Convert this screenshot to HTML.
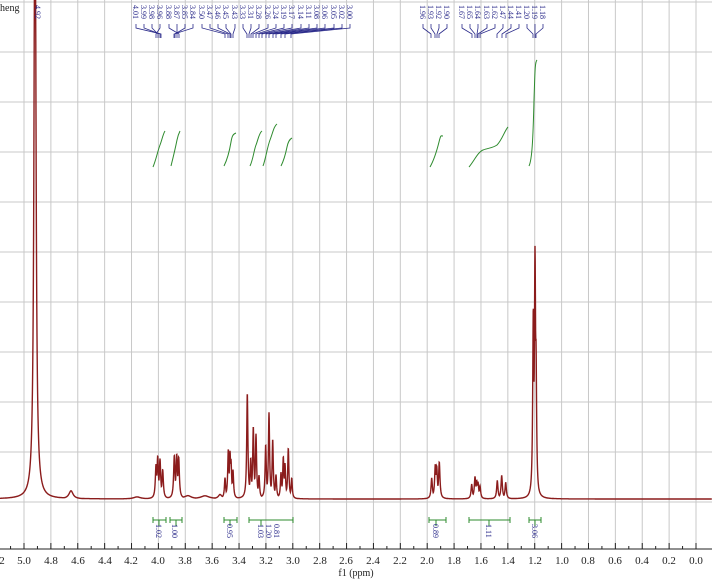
<!DOCTYPE html>
<html><head><meta charset="utf-8">
<style>
html,body{margin:0;padding:0;background:#fff;width:712px;height:580px;overflow:hidden}
svg{position:absolute;left:0;top:0}
text{font-family:"Liberation Serif","Noto Serif CJK SC",serif}
.pl{font-size:8px;fill:#2a2a8a}
.ax{font-size:11px;fill:#222}
.il{font-size:8px;fill:#2a2a8a}
</style></head><body>
<svg id="s" width="712" height="580" viewBox="0 0 712 580">
<g id="grid" stroke="#c8c8c8" stroke-width="1"></g>
<g id="ticks" stroke="#222" stroke-width="1"></g>
<line x1="0" y1="549" x2="712" y2="549" stroke="#222" stroke-width="1"/>
<path id="spec" fill="none" stroke="#8b1c1c" stroke-width="1.4"/>
<g id="integ" fill="none" stroke="#2e8b2e" stroke-width="1">
<path d="M153,167 C156,160 158,150 160,145 S163,134 165,131"/>
<path d="M171,166 C173,158 176,145 177,140 S179,133 180,131"/>
<path d="M224,166 C228,158 230,148 231,142 S233,134 236,133"/>
<path d="M250,166 C253,160 254,150 256,145 S259,133 262,131"/>
<path d="M263,166 C266,158 267,148 270,140 S274,126 277,124"/>
<path d="M281,166 C284,160 286,152 287,147 S290,139 292,138"/>
<path d="M430,167 C434,160 437,150 439,142 S441,136 443,136"/>
<path d="M469,167 C474,161 478,152 483,150 C488,148 493,148 497,145 C502,140 505,130 508,127"/>
<path d="M529,166 C532,160 533,140 534,100 C535,70 535,62 537,60"/>
</g>
<g id="bars" stroke="#2e8b2e" stroke-width="1"></g>
<g id="lines" stroke="#2a2a8a" stroke-width="0.8" fill="none"></g>
<text x="0" y="11" font-size="10" fill="#222">heng</text>
<g class="pl">
<text transform="translate(35,5) rotate(90)">4.92</text>
</g>
<g class="pl" id="toplabels">
<text transform="translate(133,5) rotate(90)">4.01</text>
<text transform="translate(141,5) rotate(90)">3.99</text>
<text transform="translate(149,5) rotate(90)">3.98</text>
<text transform="translate(157,5) rotate(90)">3.96</text>
<text transform="translate(166,5) rotate(90)">3.88</text>
<text transform="translate(174,5) rotate(90)">3.87</text>
<text transform="translate(182,5) rotate(90)">3.85</text>
<text transform="translate(190,5) rotate(90)">3.84</text>
<text transform="translate(199,5) rotate(90)">3.50</text>
<text transform="translate(207,5) rotate(90)">3.47</text>
<text transform="translate(215,5) rotate(90)">3.46</text>
<text transform="translate(223,5) rotate(90)">3.45</text>
<text transform="translate(232,5) rotate(90)">3.43</text>
<text transform="translate(240,5) rotate(90)">3.33</text>
<text transform="translate(248,5) rotate(90)">3.31</text>
<text transform="translate(256,5) rotate(90)">3.28</text>
<text transform="translate(265,5) rotate(90)">3.26</text>
<text transform="translate(273,5) rotate(90)">3.24</text>
<text transform="translate(281,5) rotate(90)">3.19</text>
<text transform="translate(289,5) rotate(90)">3.17</text>
<text transform="translate(298,5) rotate(90)">3.14</text>
<text transform="translate(306,5) rotate(90)">3.11</text>
<text transform="translate(314,5) rotate(90)">3.08</text>
<text transform="translate(322,5) rotate(90)">3.06</text>
<text transform="translate(331,5) rotate(90)">3.05</text>
<text transform="translate(339,5) rotate(90)">3.02</text>
<text transform="translate(347,5) rotate(90)">3.00</text>
<text transform="translate(420,5) rotate(90)">1.96</text>
<text transform="translate(428,5) rotate(90)">1.93</text>
<text transform="translate(436,5) rotate(90)">1.92</text>
<text transform="translate(444,5) rotate(90)">1.90</text>
<text transform="translate(459,5) rotate(90)">1.67</text>
<text transform="translate(467,5) rotate(90)">1.65</text>
<text transform="translate(475,5) rotate(90)">1.64</text>
<text transform="translate(484,5) rotate(90)">1.63</text>
<text transform="translate(492,5) rotate(90)">1.62</text>
<text transform="translate(500,5) rotate(90)">1.47</text>
<text transform="translate(508,5) rotate(90)">1.44</text>
<text transform="translate(516,5) rotate(90)">1.41</text>
<text transform="translate(524,5) rotate(90)">1.20</text>
<text transform="translate(532,5) rotate(90)">1.19</text>
<text transform="translate(540,5) rotate(90)">1.18</text>
</g>
<g class="il">
<text transform="translate(156,524) rotate(90)">1.02</text>
<text transform="translate(172,524) rotate(90)">1.00</text>
<text transform="translate(227,524) rotate(90)">0.95</text>
<text transform="translate(258,524) rotate(90)">1.03</text>
<text transform="translate(266,524) rotate(90)">1.20</text>
<text transform="translate(274,524) rotate(90)">0.81</text>
<text transform="translate(433,524) rotate(90)">0.89</text>
<text transform="translate(486,524) rotate(90)">1.11</text>
<text transform="translate(532,524) rotate(90)">3.06</text>
</g>
<g class="ax" text-anchor="middle">
<text x="2" y="564">2</text>
<text x="24" y="564">5.0</text>
<text x="51" y="564">4.8</text>
<text x="78" y="564">4.6</text>
<text x="105" y="564">4.4</text>
<text x="131" y="564">4.2</text>
<text x="158" y="564">4.0</text>
<text x="185" y="564">3.8</text>
<text x="212" y="564">3.6</text>
<text x="239" y="564">3.4</text>
<text x="266" y="564">3.2</text>
<text x="293" y="564">3.0</text>
<text x="320" y="564">2.8</text>
<text x="346" y="564">2.6</text>
<text x="373" y="564">2.4</text>
<text x="400" y="564">2.2</text>
<text x="427" y="564">2.0</text>
<text x="454" y="564">1.8</text>
<text x="481" y="564">1.6</text>
<text x="508" y="564">1.4</text>
<text x="535" y="564">1.2</text>
<text x="562" y="564">1.0</text>
<text x="588" y="564">0.8</text>
<text x="615" y="564">0.6</text>
<text x="642" y="564">0.4</text>
<text x="669" y="564">0.2</text>
<text x="696" y="564">0.0</text>
<text x="356" y="576" font-size="10">f1 (ppm)</text>
</g>
</svg>
<script>
var NS="http://www.w3.org/2000/svg";
function el(p,t,a){var e=document.createElementNS(NS,t);for(var k in a)e.setAttribute(k,a[k]);document.getElementById(p).appendChild(e);}
function X(p){return 696-134.4*p;}
for(var i=0;i<=26;i++){var x=X(i*0.2);el("grid","line",{x1:x,y1:0,x2:x,y2:549});el("ticks","line",{x1:x,y1:543,x2:x,y2:549});var xm=X(i*0.2+0.1);el("ticks","line",{x1:xm,y1:546,x2:xm,y2:549});}
for(var y=2;y<=502;y+=50)el("grid","line",{x1:0,y1:y,x2:712,y2:y});
var B=499;
var pk=[[35,700,1.1],[71,8,2.5],[137,2,4],[156,32,0.8],[157.7,40,0.8],[160,38,0.8],[162.7,28,0.8],[174.3,42,0.8],[176.7,42,0.8],[178.7,40,0.8],[188,3,4],[205,3,5],[220,4,2],[225,20,0.7],[228.3,47,0.7],[230,42,0.7],[231,34,0.7],[233,27,0.7],[247.3,105,0.7],[250.7,38,0.7],[253.3,70,0.7],[256,63,0.7],[259,22,0.7],[265.7,53,0.7],[269,85,0.7],[272.7,58,0.7],[276,23,0.7],[281,25,0.7],[283.3,40,0.7],[285,33,0.7],[288.3,50,0.7],[291.7,20,0.7],[431.7,20,0.8],[435.3,32,0.8],[436.7,30,0.8],[439.3,36,0.8],[471.7,14,0.8],[475,21,0.8],[476.7,16,0.8],[478,15,0.8],[480,12,0.8],[497.3,18,0.8],[501.7,23,0.8],[505.7,16,0.8],[533.3,180,0.7],[535,232,0.7],[536,134,0.7]];
var d="";for(var x=0;x<=712;x+=0.2){var s=0,m=0;for(var j=0;j<pk.length;j++){var u=(x-pk[j][0])/pk[j][2];var v=pk[j][1]/(1+u*u);s+=v;if(v>m)m=v;}var h=m+0.3*(s-m);var yy=Math.max(-5,B-h);d+=(x?"L":"M")+x.toFixed(2)+","+yy.toFixed(1);}
document.getElementById("spec").setAttribute("d",d);
var tl=[[133,161],[141,160],[149,158],[157,156],[166,179],[174,177],[182,175],[190,174],[199,225],[207,228],[215,230],[223,231],[232,233],[240,247],[248,249],[256,251],[265,253],[273,256],[281,259],[289,262],[298,266],[306,269],[314,273],[322,276],[331,281],[339,285],[347,291],[420,431],[428,435],[436,437],[444,439],[459,472],[467,475],[475,477],[484,478],[492,480],[500,497],[508,502],[516,506],[524,533],[532,535],[540,536]];
tl.forEach(function(t){var lx=t[0]+3;el("lines","path",{d:"M"+lx+",24 V28 L"+t[1]+",34 V38"});});
[[153,166,159],[170,182,176],[224,237,230],[249,293,261],[429,446,436],[469,510,489],[529,541,535]].forEach(function(b){el("bars","line",{x1:b[0],y1:520,x2:b[1],y2:520});el("bars","line",{x1:b[0],y1:517,x2:b[0],y2:523});el("bars","line",{x1:b[1],y1:517,x2:b[1],y2:523});el("bars","line",{x1:b[2],y1:520,x2:b[2],y2:526});});
</script>
</body></html>
